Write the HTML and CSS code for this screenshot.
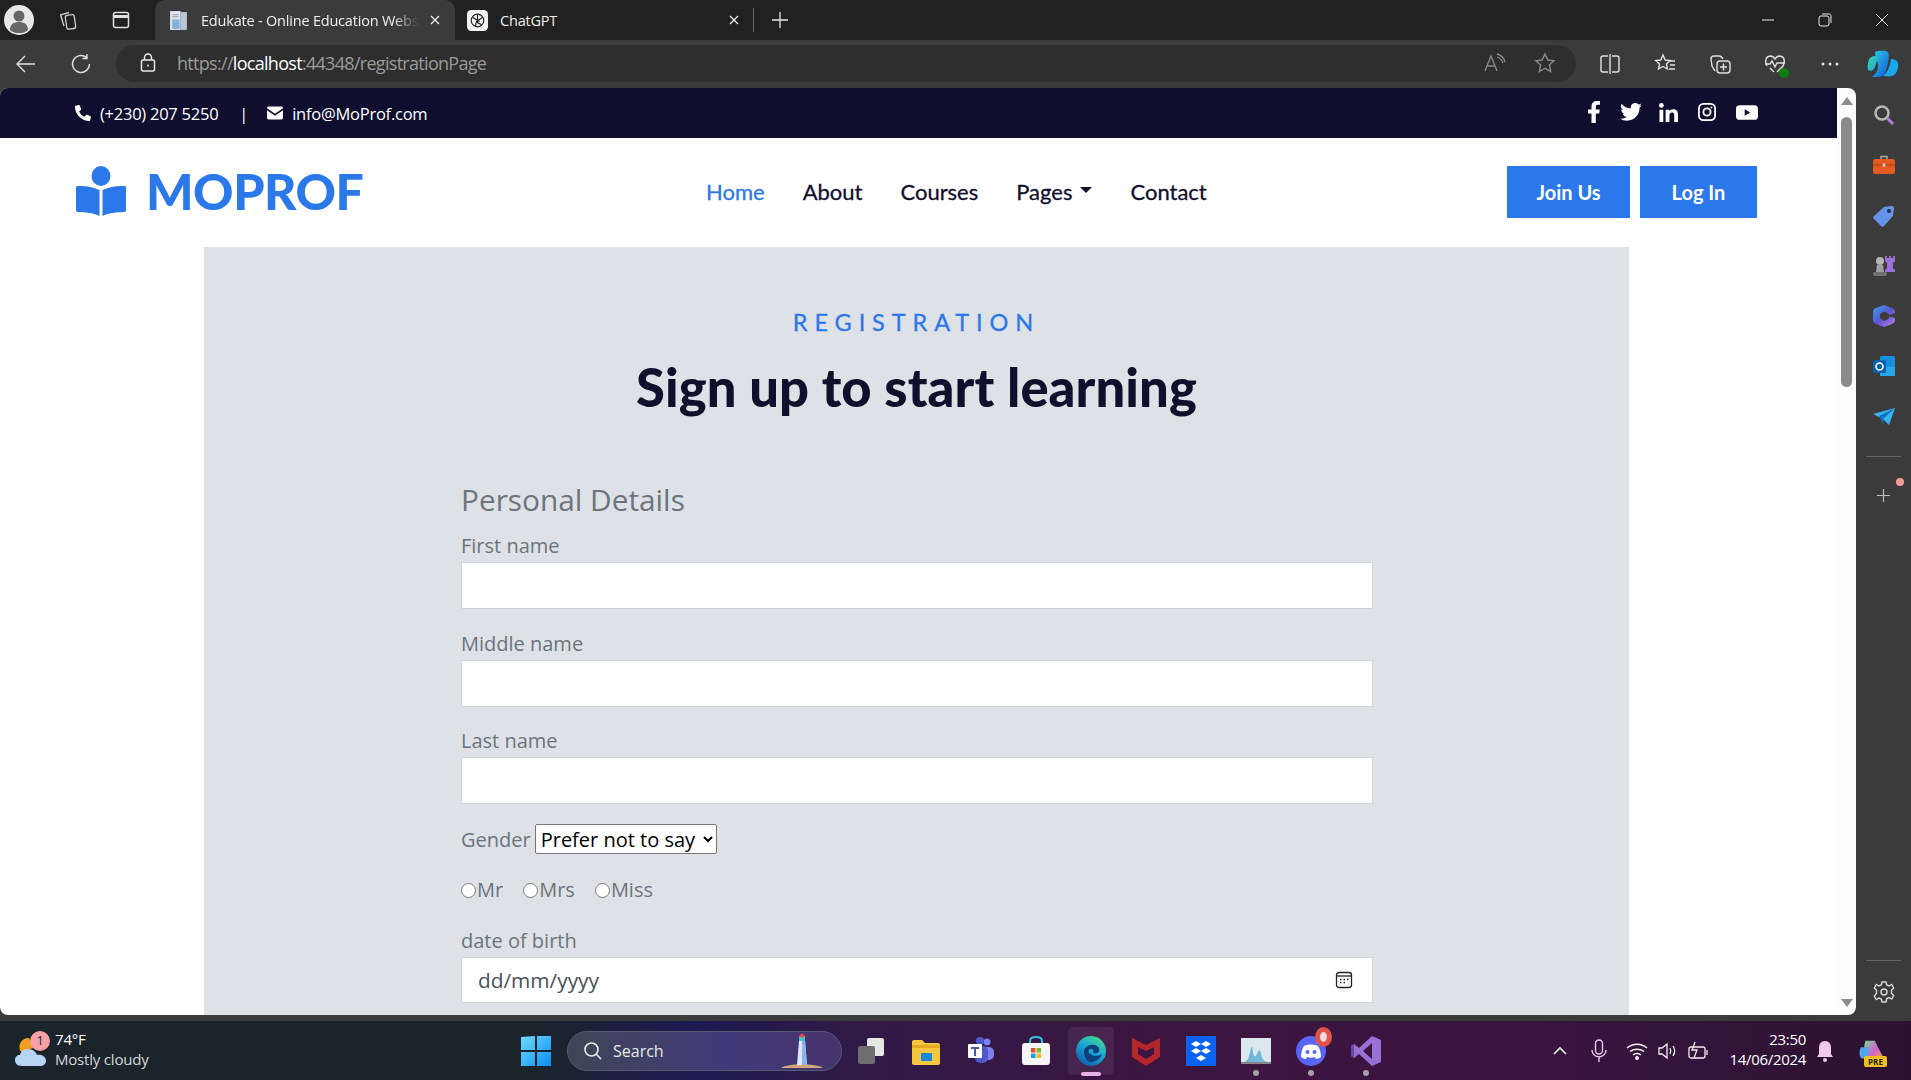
FILE: index.html
```html
<!DOCTYPE html>
<html lang="en">
<head>
<meta charset="utf-8">
<title>Edukate - Online Education Website</title>
<link rel="stylesheet" href="styles.css">
</head>
<body>
<div class="screen">
  <header class="tabstrip">
    <div class="profile"><svg viewBox="0 0 30 30" width="30" height="30"><circle cx="15" cy="15" r="15" fill="#e8e8e8"/><circle cx="15" cy="11" r="5.5" fill="#666"/><path d="M6 25c0-6 4-8 9-8s9 2 9 8c-2.500 2.500-6 3-9 3s-6.500-.5-9-3z" fill="#666"/></svg></div>
    <svg class="strip-ic workspaces" viewBox="0 0 22 22" fill="none" stroke="#d0d0d0" stroke-width="1.300"><rect x="9" y="6" width="9" height="14" rx="2" transform="rotate(-8 13 13)"/><path d="M7 17 4 7.500c-.3-1 .2-1.900 1.200-2.200L12 3.500M6 14 3.500 5"/></svg>
    <svg class="strip-ic tabs-ic" viewBox="0 0 22 22" fill="none" stroke="#e0e0e0" stroke-width="1.500"><rect x="3.500" y="3.500" width="15" height="15" rx="2"/><path d="M3.500 7.500h15" stroke-width="3"/></svg>
    <div class="tab active">
      <svg class="favicon" viewBox="0 0 20 20"><path d="M2 1h10v18H2z" fill="#dfe6ee"/><path d="M12 2h6v17h-6z" fill="#b8c6d6"/><path d="M4 9h7v9H4z" fill="#7fb2dd"/><path d="M4 4h6v1H4zM4 6h6v1H4z" fill="#8ba0b5"/></svg>
      <span class="tab-title fade">Edukate - Online Education Website</span>
      <svg class="tab-x" viewBox="0 0 12 12" stroke="#e8e8e8" stroke-width="1.400"><path d="M2 2l8 8M10 2l-8 8"/></svg>
    </div>
    <div class="tab second">
      <svg class="favicon" viewBox="0 0 20 20"><rect x="0" y="0" width="20" height="20" rx="4" fill="#f2f2f2"/><g fill="none" stroke="#222" stroke-width="1.100"><circle cx="10" cy="10" r="6"/><path d="M10 4v8l4 2M5 7l7 4M15 7l-6 4-1 5"/></g></svg>
      <span class="tab-title">ChatGPT</span>
      <svg class="tab-x" viewBox="0 0 12 12" stroke="#e8e8e8" stroke-width="1.400"><path d="M2 2l8 8M10 2l-8 8"/></svg>
    </div>
    <span class="tab-sep"></span>
    <svg class="new-tab" viewBox="0 0 20 20" stroke="#e8e8e8" stroke-width="1.300"><path d="M10 2v16M2 10h16"/></svg>
    <div class="win-controls">
      <svg viewBox="0 0 14 14" stroke="#e8e8e8" stroke-width="1"><path d="M1 7h12"/></svg>
      <svg viewBox="0 0 14 14" fill="none" stroke="#e8e8e8" stroke-width="1"><rect x="1" y="3" width="10" height="10" rx="2"/><path d="M4 1h7c1.200 0 2 .8 2 2v7"/></svg>
      <svg viewBox="0 0 14 14" stroke="#e8e8e8" stroke-width="1"><path d="M1 1l12 12M13 1 1 13"/></svg>
    </div>
  </header>

  <nav class="toolbar">
    <svg class="tool-ic back" viewBox="0 0 22 22" fill="none" stroke="#e0e0e0" stroke-width="1.400"><path d="M20 11H2M10 3l-8 8 8 8"/></svg>
    <svg class="tool-ic reload" viewBox="0 0 22 22" fill="none" stroke="#e0e0e0" stroke-width="1.400"><path d="M16.500 4.500A8.500 8.500 0 1 0 19.500 11M17 1v4.500h-4.500"/></svg>
    <div class="address">
      <svg class="lock" viewBox="0 0 18 20" fill="none" stroke="#e8e8e8" stroke-width="1.500"><rect x="2.500" y="7" width="13" height="11" rx="1.500"/><path d="M5.500 7V4.500a3.500 3.500 0 0 1 7 0V7"/><circle cx="9" cy="12.500" r="1" fill="#e8e8e8" stroke="none"/></svg>
      <span class="url">https://<b>localhost</b>:44348/registrationPage</span>
      <svg class="read" viewBox="0 0 22 20" fill="none" stroke="#8a8a8a" stroke-width="1.300"><path d="M1 18 7 3l6 15M3.500 13h7M13 4c3 1 5 3 6 6M13 1c4 1 7 4 8 8"/></svg>
      <svg class="star" viewBox="0 0 22 22" fill="none" stroke="#8a8a8a" stroke-width="1.400"><path d="m11 2 2.800 6 6.200.7-4.600 4.300 1.300 6.500L11 16.200 5.300 19.500l1.300-6.500L2 8.700 8.200 8z"/></svg>
    </div>
    <div class="tool-group">
      <svg viewBox="0 0 22 22" fill="none" stroke="#e0e0e0" stroke-width="1.400"><path d="M9 3H4a2 2 0 0 0-2 2v12a2 2 0 0 0 2 2h5M13 3h5a2 2 0 0 1 2 2v12a2 2 0 0 1-2 2h-5M11 1v20"/></svg>
      <svg viewBox="0 0 22 22" fill="none" stroke="#e0e0e0" stroke-width="1.400"><path d="m9 2 2.200 5 5 .5-3.700 3.500 1 5L9 13.500 4.500 16l1-5L1.800 7.500l5-.5zM15 8h6M16 12h5M15 16h6"/></svg>
      <svg viewBox="0 0 22 22" fill="none" stroke="#e0e0e0" stroke-width="1.400"><path d="M6 18 3 13 2 6c0-2 1-3 3-3h5c2 0 3 1 4 3"/><rect x="8" y="8" width="13" height="12" rx="3"/><path d="M14.500 10.500v7M11 14h7"/></svg>
      <span class="health"><svg viewBox="0 0 22 22" fill="none" stroke="#e0e0e0" stroke-width="1.400"><path d="M3 13C1 9 1 3.500 6 3c2 0 4 1 5 3 1-2 3-3 5-3 5 .5 5 6 3 10l-6 6M1 11h5l2-3 3 6 2-4h8M6 15l4 4"/></svg><i class="health-dot"></i></span>
      <svg viewBox="0 0 22 22" fill="#e0e0e0"><circle cx="4" cy="11" r="1.500"/><circle cx="11" cy="11" r="1.500"/><circle cx="18" cy="11" r="1.500"/></svg>
    </div>
    <svg class="copilot" viewBox="0 0 32 28"><defs><linearGradient id="cp1" x1="0" y1="0" x2="1" y2="1"><stop offset="0" stop-color="#2bd0e8"/><stop offset="1" stop-color="#1058d8"/></linearGradient><linearGradient id="cp2" x1="0" y1="0" x2="1" y2="1"><stop offset="0" stop-color="#3ad7a0"/><stop offset="1" stop-color="#1aa6e8"/></linearGradient></defs><path d="M8 2c2-1.500 12-2 13 0 2 4 0 14-3 21-1 3-5 4-8 4H5c4-3 7-8 6-13-.5-3-2-4-2-4z" fill="url(#cp1)"/><path d="M3 8C1 10 0 17 1 20c1 1 4 1 5 0 3-3 4-9 4-13-1-2-5-1-7 1z" fill="url(#cp2)"/><path d="M24 9c3 0 6 1 7 4 1 3-1 12-6 13-3 .5-8 .5-9 0 4-3 7-9 8-17z" fill="#18a8ec"/></svg>
  </nav>

  <div class="workspace">
    <main class="page">
      <div class="topbar">
        <div class="contact">
          <svg class="tb-ic" viewBox="0 0 512 512" fill="#fff"><path d="M493 24 389 0c-11-3-23 3-27 14l-48 112c-4 10-1 21 7 28l61 50c-36 76-98 139-175 175l-50-61c-7-8-18-11-28-7L17 359c-11 5-17 16-14 28l24 104c2 11 12 19 23 19 256 0 464-207 464-464 0-11-8-21-21-22z" transform="matrix(-1 0 0 1 512 0)"/></svg>
          <span>(+230) 207 5250</span>
          <span class="pipe">|</span>
          <svg class="tb-ic" viewBox="0 0 20 16" fill="#fff"><path d="M2 0h16c1 0 2 .8 2 2L10 9 0 2c0-1.200 1-2 2-2zM0 4.500V14c0 1.100.9 2 2 2h16c1.100 0 2-.9 2-2V4.500L10 11.500z"/></svg>
          <span>info@MoProf.com</span>
        </div>
        <div class="social">
          <svg viewBox="0 0 12 22" width="12" height="22" fill="#fff"><path d="M3.500 22V12.500H0V8.500h3.500V5.500C3.500 2 5.700 0 8.800 0c1.500 0 2.700.1 3.200.2v3.600H9.800c-1.700 0-2 .8-2 2v2.700h3.900l-.5 4H7.800V22z"/></svg>
          <svg viewBox="0 0 24 20" width="22" height="18" fill="#fff"><path d="M24 2.400c-.9.400-1.800.7-2.800.8 1-.6 1.800-1.600 2.200-2.700-1 .6-2 1-3.100 1.200A4.900 4.900 0 0 0 11.900 6.200C7.800 6 4.200 4.100 1.700.9a4.900 4.900 0 0 0 1.500 6.600c-.8 0-1.600-.2-2.200-.6 0 2.400 1.700 4.500 3.900 5-.7.200-1.500.2-2.200.1.600 2 2.400 3.400 4.600 3.400A10 10 0 0 1 0 17.400 14 14 0 0 0 7.500 19.600c9.100 0 14.300-7.700 14-14.600 1-.7 1.800-1.600 2.500-2.600z"/></svg>
          <svg viewBox="0 0 20 20" width="19" height="19" fill="#fff"><circle cx="2.500" cy="2.500" r="2.500"/><path d="M.5 7h4v13h-4zM7 7h3.800v1.800C11.500 7.700 13 6.700 15 6.700c4 0 5 2.500 5 6V20h-4v-6.500c0-1.600 0-3.400-2.200-3.400s-2.800 1.600-2.800 3.300V20H7z"/></svg>
          <svg viewBox="0 0 20 20" width="18" height="18" fill="none" stroke="#fff" stroke-width="2"><rect x="1" y="1" width="18" height="18" rx="5"/><circle cx="10" cy="10" r="4"/><circle cx="15" cy="5" r="1" fill="#fff" stroke="none"/></svg>
          <svg viewBox="0 0 24 16" width="22" height="15"><rect width="24" height="16" rx="4" fill="#fff"/><path d="m9.500 4.500 6 3.500-6 3.500z" fill="#100e2e"/></svg>
        </div>
      </div>

      <div class="navbar">
        <a class="brand" href="#">
          <svg class="brand-mark" viewBox="0 0 50 50" fill="#2b78ea"><ellipse cx="25" cy="10" rx="9.500" ry="10"/><path d="M1 20c8-.5 15 .5 22.500 4v26c-7-3.500-14-3.500-21.500-4-1 0-2-.5-2-2V22c0-1 .5-2 1-2zM49 20c-8-.5-15 .5-22.500 4v26c7-3.500 14-3.500 21.500-4 1 0 2-.5 2-2V22c0-1-.5-2-1-2z"/></svg>
          <span>MOPROF</span>
        </a>
        <ul class="menu">
          <li class="current">Home</li>
          <li>About</li>
          <li>Courses</li>
          <li class="dropdown">Pages</li>
          <li>Contact</li>
        </ul>
        <div class="actions">
          <a class="btn join" href="#">Join Us</a>
          <a class="btn login" href="#">Log In</a>
        </div>
      </div>

      <section class="panel">
        <div class="eyebrow">REGISTRATION</div>
        <h1>Sign up to start learning</h1>
        <form class="form">
          <h2>Personal Details</h2>
          <div class="field"><label for="fn">First name</label><input id="fn" type="text"></div>
          <div class="field"><label for="mn">Middle name</label><input id="mn" type="text"></div>
          <div class="field"><label for="ln">Last name</label><input id="ln" type="text"></div>
          <div class="gender">
            <label for="gd">Gender</label>
            <select id="gd"><option>Prefer not to say</option><option>Male</option><option>Female</option></select>
          </div>
          <div class="titles">
            <label><input type="radio" name="t">Mr</label>
            <label><input type="radio" name="t">Mrs</label>
            <label><input type="radio" name="t">Miss</label>
          </div>
          <div class="field dob">
            <label>date of birth</label>
            <div class="date-box"><span>dd/mm/yyyy</span>
              <svg viewBox="0 0 18 18" width="18" height="18" fill="none" stroke="#222" stroke-width="1.300"><rect x="1.500" y="1.500" width="15" height="15" rx="2.500"/><path d="M1.500 5h15"/><path d="M5 8.500h1.500M8.500 8.500H10M12 8.500h1.500M5 11.500h1.500M8.500 11.500H10" stroke-width="1.600"/></svg>
            </div>
          </div>
        </form>
      </section>
    </main>

    <div class="scrollbar">
      <i class="arrow up"></i>
      <i class="thumb"></i>
      <i class="arrow down"></i>
    </div>

    <aside class="sidebar">
      <svg viewBox="0 0 24 24"><circle cx="10" cy="10" r="6.500" fill="none" stroke="#b8b8b8" stroke-width="2.500"/><path d="m15 15 6 6" stroke="#b07fe0" stroke-width="3"/></svg>
      <svg viewBox="0 0 24 24"><path d="M9 6V3.500h6V6" fill="none" stroke="#aaa" stroke-width="1.500"/><rect x="1" y="6" width="22" height="15" rx="2" fill="#e55a20"/><path d="M1 12h22" stroke="#a33c10"/><rect x="10.500" y="10.500" width="3" height="3" fill="#ccc"/></svg>
      <svg viewBox="0 0 24 24"><path d="M12 3l8-1c1 0 2 1 2 2l-1 8-9 10c-1 1-2 1-3 0L2 15c-1-1-1-2 0-3z" fill="#6394e8"/><circle cx="17" cy="7" r="2" fill="#20304a"/></svg>
      <svg viewBox="0 0 24 24"><path d="M13 2h2v2h2V2h2v2h2V2h2v5l-2 2v5l2 2v2H13v-2l2-2V9l-2-2z" fill="#9b6fd8"/><circle cx="8" cy="7" r="4" fill="#b4b4b4"/><path d="M5 11h6l1 7H4z" fill="#a0a0a0"/><rect x="1" y="18" width="14" height="4" rx="2" fill="#707070"/></svg>
      <svg viewBox="0 0 24 24"><defs><linearGradient id="ms" x1="0" y1="0" x2="1" y2="1"><stop offset="0" stop-color="#35a8e6"/><stop offset=".5" stop-color="#5a55d0"/><stop offset="1" stop-color="#c47be8"/></linearGradient></defs><path d="M12 1l8 3c2 1 3 2 3 4v8c0 2-1 3-3 4l-8 3-8-3c-2-1-3-2-3-4V8c0-2 1-3 3-4z" fill="url(#ms)"/><path d="M12 7.500 17 10v4.500l-5 2.500-4-3v-4zM14 12l9-3v5z" fill="#3b3b3b"/></svg>
      <svg viewBox="0 0 24 24"><rect x="8" y="2" width="15" height="20" rx="1.500" fill="#1490df"/><path d="M8 13h15v9H8z" fill="#28a8ea"/><rect x="1" y="6" width="13" height="13" rx="1.500" fill="#0a5fb0"/><circle cx="7.500" cy="12.500" r="3.500" fill="none" stroke="#fff" stroke-width="1.600"/></svg>
      <svg viewBox="0 0 24 24"><path d="M1 9 23 3 17 20 11 14z" fill="#35b4f0"/><path d="M7 11 23 3 11 14l1 6z" fill="#1270c8"/></svg>
      <i class="side-sep"></i>
      <span class="side-add"><svg viewBox="0 0 16 16" stroke="#bdbdbd" stroke-width="1.300"><path d="M8 1v14M1 8h14"/></svg><i class="side-dot"></i></span>
      <i class="side-sep bottom"></i>
      <svg class="gear" viewBox="0 0 24 24" fill="none" stroke="#d8d8d8" stroke-width="1.400"><circle cx="12" cy="12" r="3"/><path d="M10 2h4l.7 3 2.300 1 2.700-1.500 2 3.500-2.200 2v3.500l2.200 2-2 3.500-2.700-1.500-2.300 1L14 22h-4l-.7-3-2.300-1-2.700 1.500-2-3.500L4.500 13.500V10L2.300 8l2-3.500L7 6l2.300-1z"/></svg>
    </aside>
  </div>
  <div class="edge"></div>

  <footer class="taskbar">
    <div class="weather">
      <span class="weather-ic">
        <svg viewBox="0 0 32 34" width="32" height="34"><path d="M14 4a9 9 0 0 0-8 14l12-4z" fill="#f0a020"/><path d="M7 32C2 32 0 29 0 26c0-3 2-5 5-5 1-4 4-6 8-6 5 0 8 3 9 6 5-1 9 2 9 6 0 3-3 5-6 5z" fill="#b8d4f4"/></svg>
        <i class="badge">1</i>
      </span>
      <div class="weather-text"><div>74°F</div><div class="dim">Mostly cloudy</div></div>
    </div>
    <div class="task-center">
      <svg class="win" viewBox="0 0 30 30"><defs><linearGradient id="wg" x1="0" y1="0" x2="1" y2="1"><stop offset="0" stop-color="#6fdcff"/><stop offset="1" stop-color="#0a8cf0"/></linearGradient></defs><path d="M0 1l14-1v14H0zM16 0h14v14H16zM0 16h14v14H0zM16 16h14v14H16z" fill="url(#wg)"/></svg>
      <div class="search">
        <svg viewBox="0 0 20 20" width="20" height="20" fill="none" stroke="#e8e8e8" stroke-width="1.700"><circle cx="8.500" cy="8.500" r="6.500"/><path d="m13 13 5 5"/></svg>
        <span>Search</span>
        <svg class="search-art" viewBox="0 0 46 38"><path d="M2 36c8-5 34-5 42 0z" fill="#d7a77c"/><path d="M20 9h6l2 24H18z" fill="#dbe8fb"/><path d="M23 9h3l2 24h-5z" fill="#8db4ea"/><rect x="20" y="5" width="6" height="4" fill="#46c0c0"/><path d="M23 1l4 4H19z" fill="#e04a50"/></svg>
      </div>
      <div class="apps">
        <svg viewBox="0 0 30 30" class="app-view"><rect x="11" y="2" width="17" height="18" rx="2" fill="#e6e6e6"/><rect x="2" y="10" width="17" height="18" rx="2" fill="#6f6f6f"/></svg>
        <svg viewBox="0 0 30 30"><path d="M1 6c0-1 .5-2 2-2h8l3 3h13c1.500 0 2 1 2 2v18c0 1-.5 2-2 2H3c-1.500 0-2-1-2-2z" fill="#f7c63f"/><path d="M1 9h28v3H1z" fill="#e5a922"/><rect x="10" y="17" width="11" height="8" rx="1" fill="#1588d8"/></svg>
        <svg viewBox="0 0 30 30"><circle cx="21" cy="6" r="3.500" fill="#7b83eb"/><rect x="16" y="11" width="12" height="13" rx="5" fill="#7b83eb"/><circle cx="14" cy="5" r="4" fill="#5059c9"/><rect x="9" y="10" width="13" height="17" rx="5" fill="#5059c9"/><rect x="2" y="8" width="14" height="14" rx="1" fill="#fff"/><path d="M5 11h8v2h-3v7H8v-7H5z" fill="#4b53bc"/></svg>
        <svg viewBox="0 0 30 30"><path d="M9 8V5c0-2 2-4 6-4s6 2 6 4v3" fill="none" stroke="#2bc3e0" stroke-width="2"/><rect x="1" y="7" width="28" height="22" rx="3" fill="#f5f5f5"/><path d="M10 12h4.500v4.500H10z" fill="#e74c2c"/><path d="M15.500 12H20v4.500h-4.500z" fill="#7ab82c"/><path d="M10 17.500h4.500V22H10z" fill="#1a9be8"/><path d="M15.500 17.500H20V22h-4.500z" fill="#f8b81c"/></svg>
        <span class="app-active"><svg viewBox="0 0 30 30"><defs><linearGradient id="eg" x1="0.800" y1="0" x2="0.200" y2="1"><stop offset="0" stop-color="#45d88a"/><stop offset=".45" stop-color="#1ba8d8"/><stop offset="1" stop-color="#0c59a4"/></linearGradient></defs><circle cx="15" cy="15" r="15" fill="url(#eg)"/><path d="M8 16c0-6 8-9 13-6 3 2 3 6 0 7-2 .5-4 0-4-1.500 1-.5 0-3-3-2.500-2 .5-2 3 0 5 3 2.500 8 2.500 12 0-1 4-6 8-11 8-4 0-7-5-7-10z" fill="#0d3f7a"/></svg><i class="app-run wide"></i></span>
        <svg viewBox="0 0 30 30" class="mc"><path d="M1 2l14 7 14-7v19l-14 9-14-9z" fill="#b3262a"/><path d="M7 11l8 4 8-4v7l-8 5-8-5z" fill="#3b1540"/></svg>
        <svg viewBox="0 0 30 30"><rect x="0" y="0" width="30" height="30" fill="#0a63f5"/><path d="M10 5l5 3-5 3-5-3zM20 5l5 3-5 3-5-3zM10 12l5 3-5 3-5-3zM20 12l5 3-5 3-5-3zM15 19l5 3-5 3-5-3z" fill="#fff"/></svg>
        <span class="app-wrap"><svg viewBox="0 0 30 30"><rect x="0" y="2" width="30" height="26" fill="#dbe9ee"/><path d="M2 26c4 0 5-2 7-10 1-6 2-8 3 0 1 5 2 6 4 2 1-3 3-6 4-1 1 6 3 9 8 9z" fill="#73b8d8"/><path d="M0 26h30v2H0z" fill="#888"/></svg><i class="app-run"></i></span>
        <span class="app-wrap"><svg viewBox="0 0 30 30"><circle cx="15" cy="15" r="15" fill="#5865f2"/><path d="M8 10c4-2 10-2 14 0 2 3 3 7 3 11-2 1-3 2-5 2l-1-2c-3 1-5 1-8 0l-1 2c-2 0-3-1-5-2 0-4 1-8 3-11z" fill="#fff"/><circle cx="11.500" cy="16" r="2" fill="#5865f2"/><circle cx="18.500" cy="16" r="2" fill="#5865f2"/></svg><i class="app-run"></i><i class="discord-dot"></i></span>
        <span class="app-wrap"><svg viewBox="0 0 30 30"><path d="M21 0l9 4v22l-9 4L8 18l-5 4-3-2V10l3-2 5 4z" fill="#9a6fd8"/><path d="M21 7v16l-9-8z" fill="#3b1540"/><path d="M0 10l3-2v14l-3-2z" fill="#6a4aa8"/></svg><i class="app-run"></i></span>
      </div>
    </div>
    <div class="tray">
      <svg class="tr chev" viewBox="0 0 16 16" fill="none" stroke="#f0f0f0" stroke-width="1.600"><path d="m2 11 6-6 6 6"/></svg>
      <svg class="tr mic" viewBox="0 0 16 24" fill="none" stroke="#e8c8e8" stroke-width="1.400"><rect x="4.500" y="1" width="7" height="14" rx="3.500"/><path d="M1 11c0 9 14 9 14 0M8 18v5"/></svg>
      <svg class="tr wifi" viewBox="0 0 22 18" fill="none" stroke="#f0f0f0" stroke-width="1.500"><path d="M1 6c6-5 14-5 20 0M4 9.500c4-3 10-3 14 0M7 13c2-2 6-2 8 0"/><circle cx="11" cy="16" r="1.200" fill="#f0f0f0"/></svg>
      <svg class="tr speak" viewBox="0 0 22 18" fill="none" stroke="#f0f0f0" stroke-width="1.300"><path d="M2 6v6h3l5 4V2L5 6zM13 6c1 2 1 4 0 6M16 4c2 3 2 7 0 10"/></svg>
      <svg class="tr batt" viewBox="0 0 22 20" fill="none" stroke="#f0f0f0" stroke-width="1.300"><rect x="2" y="6" width="16" height="11" rx="2"/><path d="M20 9v5M8 1 5 9h5L7 17"/></svg>
      <div class="clock"><div>23:50</div><div>14/06/2024</div></div>
      <svg class="tr bell" viewBox="0 0 18 22" fill="#f0c8f0"><path d="M9 1c4 0 6 3 6 7v6l2 3H1l2-3V8c0-4 2-7 6-7z"/><circle cx="9" cy="20" r="2"/></svg>
      <span class="pre">
        <svg viewBox="0 0 30 24" width="28" height="24"><defs><linearGradient id="pr" x1="0" y1="0" x2="1" y2="1"><stop offset="0" stop-color="#6fe08a"/><stop offset=".5" stop-color="#d060d0"/><stop offset="1" stop-color="#f0b020"/></linearGradient></defs><path d="M8 1h10c4 8 6 12 10 19-6 3-12 3-18 2C8 14 5 10 8 1z" fill="url(#pr)"/><path d="M3 8c-2 4-2 10 1 12h6c2-4 2-8 1-12z" fill="#50a8e8"/></svg>
        <i class="pre-tag">PRE</i>
      </span>
    </div>
  </footer>
</div>
</body>
</html>
```

FILE: styles.css
```css
* { box-sizing: border-box; }
html, body { margin: 0; height: 100%; overflow: hidden; background: #202020; }
body { font-family: "Open Sans", "Liberation Sans", sans-serif; }
svg { display: block; flex: none; }
i { display: block; font-style: normal; }
.screen { width: 1911px; height: 1080px; display: flex; flex-direction: column; overflow: hidden; }

/* Tab strip */
.tabstrip { height: 40px; background: #212121; display: flex; align-items: center; color: #efefef; font-size: 14.500px; flex: none; }
.profile { margin-left: 4px; width: 30px; height: 30px; }
.strip-ic { width: 22px; height: 22px; }
.workspaces { margin-left: 23px; }
.tabs-ic { margin-left: 31px; }
.tab { display: flex; align-items: center; height: 40px; }
.tab.active { width: 300px; margin-left: 23px; padding-left: 13px; background: #3b3b3b; border-radius: 10px 10px 0 0; }
.tab.second { width: 298px; padding-left: 12px; }
.favicon { width: 21px; height: 21px; }
.tab-title { margin-left: 12px; letter-spacing: -0.2px; white-space: nowrap; overflow: hidden; }
.tab.active .tab-title { width: 218px; }
.tab.second .tab-title { width: 218px; }
.fade { -webkit-mask-image: linear-gradient(90deg, #000 88%, transparent); mask-image: linear-gradient(90deg, #000 88%, transparent); }
.tab-x { width: 12px; height: 12px; margin-left: 10px; }
.tab-sep { width: 1px; height: 24px; background: #6a6a6a; }
.new-tab { width: 20px; height: 20px; margin-left: 16px; }
.win-controls { margin-left: auto; display: flex; gap: 43px; padding-right: 22px; }
.win-controls svg { width: 14px; height: 14px; }

/* Toolbar */
.toolbar { height: 48px; background: #3b3b3b; display: flex; align-items: center; flex: none; position: relative; }
.tool-ic { width: 22px; height: 22px; }
.back { margin-left: 15px; }
.reload { margin-left: 33px; }
.address { margin-left: 24px; width: 1460px; height: 37px; margin-top: -2px; background: #2e2e2e; border-radius: 19px; display: flex; align-items: center; padding-left: 23px; }
.lock { width: 18px; height: 20px; }
.url { margin-left: 20px; font-size: 18px; color: #9a9a9a; letter-spacing: -0.7px; }
.url b { font-weight: 400; color: #fff; }
.read { width: 22px; height: 20px; margin-left: auto; }
.star { width: 22px; height: 22px; margin-left: 28px; margin-right: 20px; }
.tool-group { display: flex; gap: 33px; margin-left: 23px; align-items: center; }
.tool-group svg { width: 22px; height: 22px; }
.health { position: relative; display: block; }
.health-dot { position: absolute; right: -3px; bottom: -3px; width: 10px; height: 10px; border-radius: 50%; background: #107c10; }
.copilot { width: 32px; height: 28px; margin-left: 26px; }

/* Page area */
.workspace { height: 927px; background: #3b3b3b; display: flex; flex: none; }
.page { width: 1837px; background: #fff; overflow: hidden; border-radius: 8px 0 0 8px; flex: none; }
.scrollbar { width: 19px; background: #fdfdfd; border-radius: 0 8px 8px 0; display: flex; flex-direction: column; align-items: center; padding: 9px 0 8px; flex: none; }
.arrow { width: 0; height: 0; border-left: 6px solid transparent; border-right: 6px solid transparent; }
.arrow.up { border-bottom: 8px solid #8b8b8b; }
.arrow.down { border-top: 8px solid #8b8b8b; margin-top: auto; }
.thumb { width: 11px; height: 270px; margin-top: 12px; background: #8b8b8b; border-radius: 6px; }

.sidebar { flex: 1; display: flex; flex-direction: column; align-items: center; padding-top: 15px; gap: 26.300px; position: relative; }
.sidebar > svg { width: 24px; height: 24px; }
.side-sep { width: 35px; height: 1px; background: #666; margin-top: 1px; }
.side-sep.bottom { margin-top: auto; margin-bottom: -7px; }
.side-add { position: relative; display: block; width: 15px; height: 15px; margin-top: 5px; }
.side-dot { position: absolute; right: -13px; top: -10px; width: 8px; height: 8px; border-radius: 50%; background: #f89a94; }
.sidebar > .gear { margin-bottom: 11px; }
.edge { height: 6px; background: #3b3b3b; flex: none; }

/* Site topbar */
.topbar { height: 50px; background: #100e2e; display: flex; justify-content: space-between; align-items: center; padding: 0 79px 0 75px; color: #fff; font-size: 16.500px; }
.contact { display: flex; align-items: center; letter-spacing: -0.25px; }
.tb-ic { width: 16px; height: 16px; margin-right: 9px; }
.pipe { margin: 0 19px 0 21px; }
.social { display: flex; align-items: center; gap: 20px; margin-top: -2px; }
.social svg:nth-child(2) { margin-right: -3px; }

/* Navbar */
.navbar { height: 109px; display: flex; align-items: center; padding: 0 80px 2px 76px; }
.brand { display: flex; align-items: center; gap: 20px; width: 630px; color: #2b78ea; text-decoration: none; font-family: "Lato", sans-serif; font-weight: 900; font-size: 50px; letter-spacing: -0.5px; margin-bottom: 1px; }
.brand-mark { width: 50px; height: 50px; }
.menu { list-style: none; display: flex; gap: 38px; margin: 0; padding: 0; color: #120f2d; font-family: "Lato", sans-serif; font-size: 22px; font-weight: 400; -webkit-text-stroke: .3px currentColor; }
.current { color: #2b78ea; }
.dropdown { display: flex; align-items: center; gap: 8px; }
.dropdown::after { content: ""; border-top: 6px solid currentColor; border-left: 6px solid transparent; border-right: 6px solid transparent; margin-bottom: 4px; }
.actions { margin-left: auto; display: flex; gap: 10px; }
.btn { height: 52px; display: flex; align-items: center; justify-content: center; background: #2b78ea; color: #fff; text-decoration: none; font-family: "Lato", sans-serif; font-weight: 700; font-size: 20px; }
.btn.join { width: 123px; }
.btn.login { width: 117px; }

/* Panel */
.panel { width: 1425px; margin-left: 204px; background: #dee1e6; height: 900px; padding-top: 56px; }
.eyebrow { text-align: center; color: #2b78ea; font-family: "Lato", sans-serif; font-size: 23.500px; line-height: 38px; font-weight: 400; -webkit-text-stroke: .3px currentColor; letter-spacing: 6.900px; }
h1 { margin: 13px 0 0; text-align: center; font-family: "Lato", sans-serif; font-weight: 900; font-size: 52.500px; line-height: 66px; letter-spacing: .1px; color: #120f2d; }
.form { width: 912px; margin: 62px 0 0 257px; color: #6c757d; font-size: 20px; }
h2 { margin: 0 0 16px; font-size: 29.800px; line-height: 36px; font-weight: 400; color: #6c757d; }
.field { margin-bottom: 22.500px; }
.field label { display: block; line-height: 24px; margin-bottom: 4px; }
.field input { display: block; width: 100%; height: 47px; border: 1px solid #ced4da; background: #fff; font: inherit; color: #495057; }
.gender { display: flex; align-items: center; gap: 4px; margin-top: -2.500px; }
select { height: 30px; width: 182px; font: inherit; font-size: 20px; background: #fff; color: #000; border: 1px solid #767676; border-radius: 2px; padding: 0 0 0 1px; }
.titles { display: flex; gap: 20px; margin-top: 24px; line-height: 24px; }
.titles label { display: flex; align-items: center; }
.titles input { width: 15px; height: 15px; margin: 0 1px 0 0; accent-color: #767676; }
.dob { margin-top: 27px; margin-bottom: 0; }
.date-box { display: flex; align-items: center; justify-content: space-between; width: 100%; height: 46px; border: 1px solid #ced4da; background: #fff; padding: 0 19px 0 16px; font-size: 20.800px; color: #495057; }

/* Taskbar */
.taskbar { height: 59px; flex: none; display: flex; align-items: center; color: #fff; background: linear-gradient(90deg, #1b242b 0, #1b242b 28%, #1c1b52 36%, #2f1a48 44%, #3c1540 60%, #3a1540 80%, #2b1232 100%); }
.weather { width: 521px; padding-left: 15px; display: flex; align-items: center; gap: 8px; font-size: 15px; line-height: 20px; letter-spacing: -0.2px; }
.weather-text { margin-top: -4px; }
.weather-ic { position: relative; display: block; }
.badge { position: absolute; left: 15px; top: -3px; width: 20px; height: 20px; border-radius: 50%; background: #f8a0a8; color: #222; font-size: 12px; line-height: 20px; text-align: center; }
.dim { color: #d8d8d8; }
.task-center { display: flex; align-items: center; }
.win { width: 30px; height: 30px; }
.search { width: 275px; height: 40px; margin-left: 16px; border-radius: 20px; background: linear-gradient(90deg, #3d4656, #42397a 60%, #46356e); border: 1px solid #545a72; display: flex; align-items: center; padding-left: 15px; gap: 10px; font-size: 16px; color: #e8e8e8; }
.search-art { width: 46px; height: 38px; margin-left: auto; margin-right: 16px; }
.apps { display: flex; align-items: center; gap: 25px; margin-left: 14px; }
.apps svg { width: 30px; height: 30px; }
.app-wrap, .app-active { position: relative; display: block; width: 30px; }
.app-active::before { content: ""; position: absolute; left: -8px; right: -8px; top: -9px; height: 48px; background: rgba(255,255,255,.07); border-radius: 5px; }
.app-active svg { position: relative; }
.app-run { position: absolute; left: 12px; bottom: -10px; width: 6px; height: 6px; border-radius: 50%; background: #a8a0a8; }
.app-run.wide { left: 5px; width: 20px; height: 4px; background: #e8b0e8; border-radius: 2px; bottom: -10px; }
.discord-dot { position: absolute; right: -6px; top: -9px; width: 17px; height: 20px; border-radius: 50%; background: #f4d8d8; border: 5px solid #e0524c; }
.tray { margin-left: auto; display: flex; align-items: center; }
.tr { flex: none; }
.chev { width: 16px; height: 16px; }
.mic { width: 16px; height: 24px; margin-left: 23px; }
.wifi { width: 22px; height: 18px; margin-left: 19px; }
.speak { width: 22px; height: 18px; margin-left: 9px; }
.batt { width: 22px; height: 20px; margin-left: 8px; }
.clock { margin-left: 15px; width: 82px; text-align: right; font-size: 15px; line-height: 20px; letter-spacing: -0.3px; margin-top: -4px; }
.bell { width: 18px; height: 22px; margin-left: 10px; }
.pre { position: relative; display: block; margin-left: 24px; margin-right: 25px; }
.pre-tag { position: absolute; left: 6px; bottom: -4px; width: 23px; height: 11px; background: #f0c020; color: #222; font-size: 8px; line-height: 11px; font-weight: 700; text-align: center; border-radius: 2px; }
```
